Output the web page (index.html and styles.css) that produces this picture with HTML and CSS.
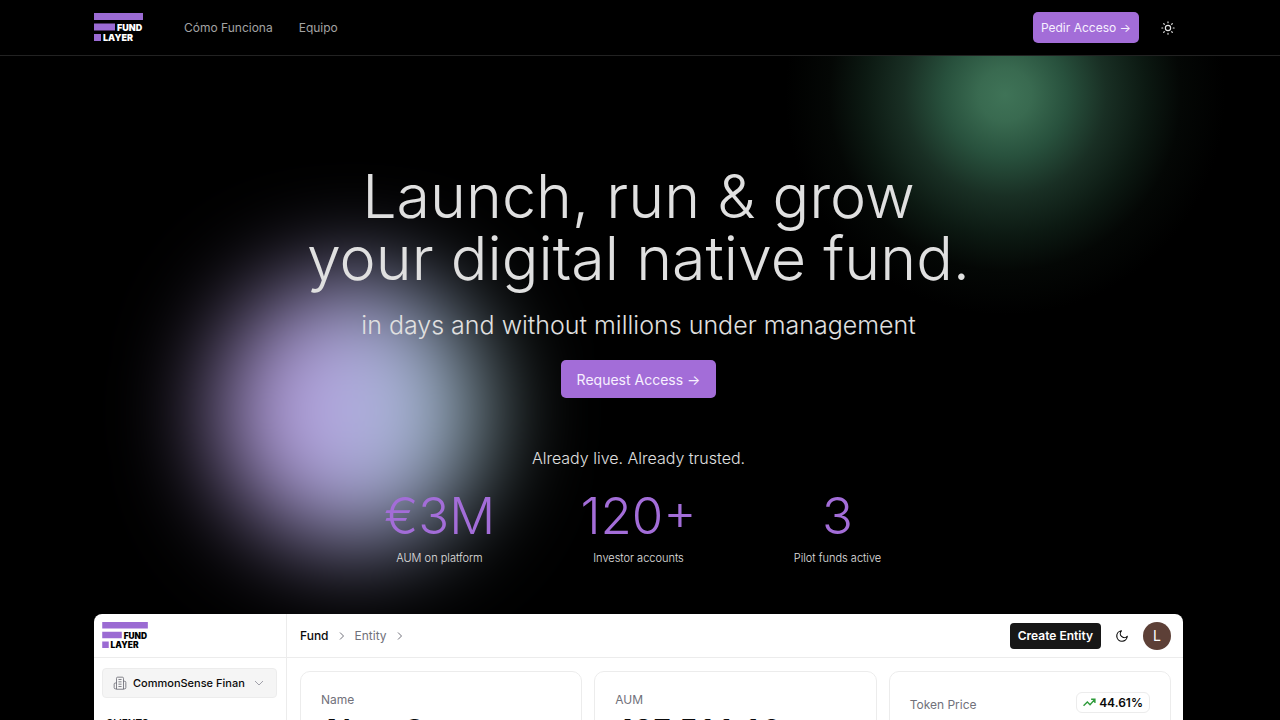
FILE: index.html
```html
<!DOCTYPE html>
<html lang="es">
<head>
    <meta charset="UTF-8">
    <meta name="viewport" content="width=device-width, initial-scale=1.0">
    <title>Fund Layer</title>
    <link rel="stylesheet" href="styles.css">
</head>
<body>
    <header class="header">
        <a class="logo" href="#" aria-label="Fund Layer">
            <svg width="50" height="29" viewBox="0 0 50 29">
                <path class="logo-bar" d="M0 0h49v7H0zM0 10.500h21v7H0zM0 21h7v7H0z"/>
                <text x="23" y="18">FUND</text>
                <text x="9" y="28">LAYER</text>
            </svg>
        </a>
        <nav class="nav">
            <a href="#">Cómo Funciona</a>
            <a href="#">Equipo</a>
        </nav>
        <button class="button button-small">Pedir Acceso →</button>
        <button class="icon-button" aria-label="Cambiar tema">
            <svg width="14" height="14" viewBox="0 0 24 24" fill="none" stroke="currentColor" stroke-width="2" stroke-linecap="round">
                <circle cx="12" cy="12" r="4.500"/>
                <path d="M12 1.500v1.500M12 21v1.500M4.600 4.600l1 1M18.400 18.400l1 1M1.500 12H3M21 12h1.500M5.600 18.400l-1 1M19.400 4.600l-1 1"/>
            </svg>
        </button>
    </header>

    <main class="hero">
        <div class="glow glow-green"></div>
        <div class="glow glow-purple"></div>

        <section class="intro">
            <h1>Launch, run &amp; grow<br>your digital native fund.</h1>
            <p class="subtitle">in days and without millions under management</p>
            <button class="button button-large">Request Access →</button>
            <p class="trusted">Already live. Already trusted.</p>
            <div class="stats">
                <div class="stat">
                    <strong>€3M</strong>
                    <span>AUM on platform</span>
                </div>
                <div class="stat">
                    <strong>120+</strong>
                    <span>Investor accounts</span>
                </div>
                <div class="stat">
                    <strong>3</strong>
                    <span>Pilot funds active</span>
                </div>
            </div>
        </section>

        <section class="dashboard">
            <aside class="sidebar">
                <div class="sidebar-top">
                    <a class="logo logo-dark" href="#" aria-label="Fund Layer">
                        <svg width="47" height="27" viewBox="0 0 50 29">
                            <path class="logo-bar" d="M0 0h49v7H0zM0 10.500h21v7H0zM0 21h7v7H0z"/>
                            <text x="23" y="18">FUND</text>
                            <text x="9" y="28">LAYER</text>
                        </svg>
                    </a>
                </div>
                <button class="company">
                    <svg width="14" height="14" viewBox="0 0 24 24" fill="none" stroke="#71717a" stroke-width="1.500" stroke-linecap="round" stroke-linejoin="round">
                        <path d="M6 22V4a2 2 0 0 1 2-2h8a2 2 0 0 1 2 2v18zM6 12H4a2 2 0 0 0-2 2v6a2 2 0 0 0 2 2h2M18 9h2a2 2 0 0 1 2 2v9a2 2 0 0 1-2 2h-2M10 6h4M10 10h4M10 14h4M10 18h4"/>
                    </svg>
                    <span>CommonSense Finan</span>
                    <svg width="10" height="10" viewBox="0 0 10 10" fill="none" stroke="#a1a1aa">
                        <path d="M1 3l4 4 4-4"/>
                    </svg>
                </button>
                <h2 class="sidebar-title">CLIENTS</h2>
            </aside>
            <div class="content">
                <div class="topbar">
                    <div class="breadcrumb">
                        <a class="current" href="#">Fund</a>
                        <svg width="6" height="8" viewBox="0 0 6 8" fill="none" stroke="#71717a"><path d="M1 0.500l3.500 3.500L1 7.500"/></svg>
                        <a href="#">Entity</a>
                        <svg width="6" height="8" viewBox="0 0 6 8" fill="none" stroke="#71717a"><path d="M1 0.500l3.500 3.500L1 7.500"/></svg>
                    </div>
                    <button class="create">Create Entity</button>
                    <button class="moon" aria-label="Modo oscuro">
                        <svg width="14" height="14" viewBox="0 0 24 24" fill="none" stroke="currentColor" stroke-width="2" stroke-linejoin="round">
                            <path d="M11 3a6.500 6.500 0 0 0 10 9.500A9 9 0 1 1 11 3z"/>
                        </svg>
                    </button>
                    <span class="avatar">L</span>
                </div>
                <div class="cards">
                    <div class="card">
                        <h3>Name</h3>
                        <p>Aleta C</p>
                    </div>
                    <div class="card">
                        <h3>AUM</h3>
                        <p>427,511.10</p>
                    </div>
                    <div class="card card-price">
                        <h3>Token Price</h3>
                        <span class="badge">
                            <svg width="13" height="13" viewBox="0 0 24 24" fill="none" stroke="#2e9b3a" stroke-width="2.500">
                                <path d="M1 18l7-7 5 5 9-10M15 6h7v7"/>
                            </svg>
                            44.61%
                        </span>
                    </div>
                </div>
            </div>
        </section>
    </main>
</body>
</html>
```
FILE: styles.css
```css
* {
    box-sizing: border-box;
}
body {
    margin: 0;
    height: 100vh;
    overflow: hidden;
    display: flex;
    flex-direction: column;
    background-color: #000;
    color: #e0e0e0;
    font-family: Inter, "Liberation Sans", sans-serif;
}
h1, h2, h3, p {
    margin: 0;
}
a {
    color: inherit;
    text-decoration: none;
}
button {
    border: none;
    font-family: inherit;
    cursor: pointer;
}
svg {
    display: block;
    flex-shrink: 0;
}

/* Header */
.header {
    display: flex;
    align-items: center;
    flex-shrink: 0;
    height: 56px;
    padding: 0 97px 0 94px;
    border-bottom: 1px solid #222;
    background-color: #000;
}
.logo svg {
    overflow: visible;
}
.logo text {
    fill: #fff;
    font-size: 9px;
    font-weight: 900;
}
.logo-bar {
    fill: #9b6bd3;
}
.logo-dark text {
    fill: #000;
}
.nav {
    display: flex;
    flex: 1;
    gap: 26px;
    margin-left: 40px;
    color: #a3a3a3;
    font-size: 12px;
}
.button {
    background-color: #a36dd8;
    color: #f7f0ff;
    border-radius: 5px;
}
.button-small {
    height: 31px;
    padding: 0 8px;
    font-size: 12px;
}
.icon-button {
    width: 30px;
    padding: 0 8px;
    margin-left: 14px;
    background: none;
    color: #e4e4e4;
}

/* Hero */
.hero {
    position: relative;
    flex: 1;
    overflow: hidden;
    padding: 109px 97px 0 94px;
}
.glow {
    position: absolute;
    border-radius: 50%;
}
.glow-green {
    top: -181px;
    right: 55px;
    width: 440px;
    height: 440px;
    background: radial-gradient(closest-side, #3f7357 0%, #396a50 12%, #28513d 28%, #192f24 46%, #0c1912 64%, #040705 80%, #000 100%);
}
.glow-purple {
    top: 220px;
    left: 218px;
    width: 270px;
    height: 270px;
    background: linear-gradient(90deg, #b89be0 0%, #b0a4dc 45%, #a9bbdc 70%, #8fb0ac 100%);
    filter: blur(50px);
}
.intro {
    position: relative;
    display: flex;
    flex-direction: column;
    align-items: center;
    text-align: center;
}
h1 {
    font-size: 61px;
    font-weight: 300;
    line-height: 62px;
}
.subtitle {
    margin-top: 19px;
    font-size: 25px;
    font-weight: 300;
    line-height: 34px;
}
.button-large {
    height: 38px;
    margin-top: 18px;
    padding: 0 16px;
    font-size: 14px;
}
.trusted {
    margin-top: 48px;
    font-size: 16px;
    font-weight: 300;
    line-height: 24px;
}
.stats {
    display: grid;
    grid-template-columns: repeat(3, 159px);
    gap: 40px;
    margin-top: 20px;
}
.stat {
    display: flex;
    flex-direction: column;
}
.stat strong {
    color: #a36dd8;
    font-size: 51px;
    font-weight: 300;
    line-height: 52px;
}
.stat span {
    margin-top: 8px;
    font-size: 11px;
    font-weight: 300;
    line-height: 16px;
}

/* Dashboard preview */
.dashboard {
    position: relative;
    display: flex;
    margin-top: 48px;
    min-height: 600px;
    border-radius: 8px;
    background-color: #fff;
    color: #0a0a0a;
    overflow: hidden;
}
.sidebar {
    width: 193px;
    border-right: 1px solid #ececec;
}
.sidebar-top {
    display: flex;
    align-items: center;
    height: 44px;
    padding: 0 8px;
    border-bottom: 1px solid #ececec;
}
.company {
    display: flex;
    align-items: center;
    gap: 6px;
    width: 175px;
    height: 30px;
    margin: 10px 8px 0;
    padding: 0 12px 0 10px;
    border: 1px solid #ececec;
    border-radius: 4px;
    background-color: #f5f5f5;
    color: #0a0a0a;
    font-size: 11px;
    font-weight: 500;
}
.company span {
    flex: 1;
    text-align: left;
    white-space: nowrap;
}
.sidebar-title {
    margin: 18px 12px 0;
    font-size: 10px;
    font-weight: 600;
    line-height: 14px;
}
.content {
    flex: 1;
}
.topbar {
    display: flex;
    align-items: center;
    height: 44px;
    padding: 0 12px 0 13px;
    border-bottom: 1px solid #ececec;
}
.breadcrumb {
    display: flex;
    align-items: center;
    flex: 1;
    gap: 10px;
    color: #71717a;
    font-size: 12px;
}
.breadcrumb .current {
    color: #0a0a0a;
    font-weight: 500;
}
.create {
    height: 26px;
    padding: 0 8px;
    border-radius: 4px;
    background-color: #171717;
    color: #fff;
    font-size: 12px;
    font-weight: 600;
}
.moon {
    padding: 0;
    margin: 0 14px;
    background: none;
    color: #0a0a0a;
}
.avatar {
    width: 28px;
    height: 28px;
    border-radius: 50%;
    background-color: #5d4037;
    color: #fff;
    font-size: 14px;
    line-height: 28px;
    text-align: center;
}
.cards {
    display: grid;
    grid-template-columns: repeat(3, 1fr);
    gap: 12px;
    padding: 13px 12px 0 13px;
}
.card {
    height: 110px;
    padding: 20px;
    border: 1px solid #ececec;
    border-radius: 10px;
}
.card h3 {
    color: #71717a;
    font-size: 12px;
    font-weight: 400;
    line-height: 16px;
}
.card p {
    margin-top: 4px;
    font-size: 29px;
    font-weight: 700;
    font-variant-numeric: tabular-nums;
    line-height: 36px;
}
.card-price {
    display: flex;
    justify-content: space-between;
    align-items: flex-start;
}
.card-price h3 {
    margin-top: 5px;
}
.badge {
    display: flex;
    align-items: center;
    gap: 3px;
    height: 21px;
    padding: 0 6px;
    border: 1px solid #ececec;
    border-radius: 6px;
    font-size: 12px;
    font-weight: 600;
}
```
